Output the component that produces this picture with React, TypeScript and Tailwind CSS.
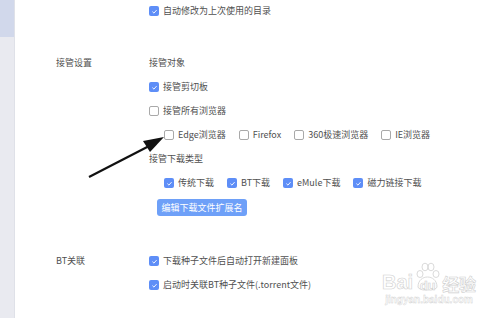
import { ReactNode } from 'react';

const font = 'font-["Noto_Sans_CJK_SC","Liberation_Sans",sans-serif]';

function Box({ checked }: { checked?: boolean }) {
  if (checked) {
    return (
      <span className="flex h-[10px] w-[10px] shrink-0 items-center justify-center rounded-[2px] bg-[#5e8ef7]">
        <svg width="7" height="7" viewBox="0 0 10 10">
          <path d="M2 5.2 L4.2 7.3 L8 3" stroke="#fff" strokeWidth="1.3" fill="none" />
        </svg>
      </span>
    );
  }
  return <span className="h-[10px] w-[10px] shrink-0 rounded-[2px] border border-[#a9a9a9] bg-white" />;
}

function Check({ checked, children }: { checked?: boolean; children: ReactNode }) {
  return (
    <span className="flex items-center gap-[4px]">
      <Box checked={checked} />
      <span>{children}</span>
    </span>
  );
}

function Row({ label, children }: { label?: string; children: ReactNode }) {
  return (
    <div className="flex h-[24px] items-center">
      <div className="w-[93px] shrink-0">{label}</div>
      <div className="flex items-center">{children}</div>
    </div>
  );
}

export default function App() {
  return (
    <div className={`flex h-[318px] w-[500px] overflow-hidden bg-white text-[9px] text-[#505050] ${font}`}>
      <div className="flex w-[15px] shrink-0 flex-col border-r border-[#dfe1e8]">
        <div className="h-[37px] bg-[#d1d8eb]" />
        <div className="flex-1 bg-[#e9eaf0]" />
      </div>

      <div className="relative flex-1 pl-[41px]">
        <div className="flex h-[22px] items-center">
          <div className="w-[93px]" />
          <Check checked>自动修改为上次使用的目录</Check>
        </div>

        <div className="mt-[29px]">
          <Row label="接管设置">接管对象</Row>
          <Row>
            <Check checked>接管剪切板</Check>
          </Row>
          <Row>
            <Check>接管所有浏览器</Check>
          </Row>
          <Row>
            <span className="ml-[15px] flex items-center gap-[13px]">
              <Check>Edge浏览器</Check>
              <Check>Firefox</Check>
              <Check>360极速浏览器</Check>
              <Check>IE浏览器</Check>
            </span>
          </Row>
          <Row>接管下载类型</Row>
          <Row>
            <span className="ml-[15px] flex items-center gap-[13px]">
              <Check checked>传统下载</Check>
              <Check checked>BT下载</Check>
              <Check checked>eMule下载</Check>
              <Check checked>磁力链接下载</Check>
            </span>
          </Row>
          <div className="mt-[4px] flex">
            <div className="w-[101px]" />
            <button className="h-[17px] w-[90px] rounded-[3px] bg-[#6ea0f8] text-[9px] text-white">
              编辑下载文件扩展名
            </button>
          </div>
        </div>

        <div className="mt-[33px]">
          <Row label="BT关联">
            <Check checked>下载种子文件后自动打开新建面板</Check>
          </Row>
          <Row>
            <Check checked>启动时关联BT种子文件(.torrent文件)</Check>
          </Row>
        </div>

        {/* arrow overlay */}
        <svg className="absolute left-[70px] top-[130px]" width="100" height="56" viewBox="0 0 100 56">
          <path d="M4 47 L68 14" stroke="#111" strokeWidth="2.2" />
          <path d="M79 7 L58 11 L65 22 Z" fill="#111" />
        </svg>

        {/* watermark */}
        <div className="absolute left-[367px] top-[262px] flex flex-col items-center text-white">
          <div className="flex items-end font-['Liberation_Sans',sans-serif] text-[20px] font-bold leading-none [-webkit-text-stroke:0.6px_#d0d0d0]">
            <span>Bai</span>
            <span className="relative mx-[2px] flex h-[30px] w-[25px] items-end justify-center">
              <svg className="absolute left-0 top-0" width="25" height="30" viewBox="0 0 25 30">
                <g fill="none" stroke="#d0d0d0" strokeWidth="0.8">
                  <ellipse cx="5" cy="12" rx="3" ry="3.5" />
                  <ellipse cx="10" cy="5" rx="3" ry="3.8" />
                  <ellipse cx="16" cy="5" rx="3" ry="3.8" />
                  <ellipse cx="21" cy="12" rx="3" ry="3.5" />
                  <path d="M3 25 C3 18 8 15 12.5 15 C17 15 22 18 22 25 C22 29 3 29 3 25 Z" />
                </g>
              </svg>
              <span className="relative text-[13px]">du</span>
            </span>
            <span className="font-['Noto_Sans_CJK_SC',sans-serif] text-[17px]">经验</span>
          </div>
          <div className="mt-[3px] font-['Liberation_Sans',sans-serif] text-[10px] font-bold leading-none [-webkit-text-stroke:0.4px_#d0d0d0]">
            jingyan.baidu.com
          </div>
        </div>
      </div>
    </div>
  );
}
